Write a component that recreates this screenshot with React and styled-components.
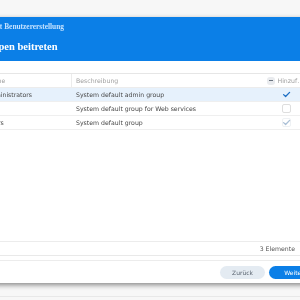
import React from 'react'
import styled, { createGlobalStyle } from 'styled-components';

const GlobalStyle = createGlobalStyle`
  html, body {
    margin: 0;
    padding: 0;
    background: #f7f7f7;
  }
  body {
    font-family: "DejaVu Sans", Verdana, sans-serif;
    -webkit-font-smoothing: antialiased;
  }
`

const groups = [
  { name: 'administrators', desc: 'System default admin group', state: 'on', selected: true },
  { name: 'http', desc: 'System default group for Web services', state: 'off' },
  { name: 'users', desc: 'System default group', state: 'locked' },
]

const Check = ({ state }) => (
  <Box $state={state}>
    {state !== 'off' && (
      <svg width="9" height="9" viewBox="0 0 9 9">
        <polyline points="1.6,4.6 3.6,6.5 7.6,2.4" fill="none"
          stroke={state === 'on' ? '#1d6fc4' : '#a9bfd6'} strokeWidth="1.3" strokeLinecap="round" strokeLinejoin="round" />
      </svg>
    )}
  </Box>
)

const App = () => {
  return (
    <Page>
      <GlobalStyle />
      <Dialog>
        <Header>
          <Subtitle>Assistent Benutzererstellung</Subtitle>
          <Title>Gruppen beitreten</Title>
        </Header>
        <Content>
          <Grid>
            <HeadRow>
              <HeadCell>Name</HeadCell>
              <HeadCell $divider>Beschreibung</HeadCell>
              <HeadCell>
                <Minus />
                <Ellipsis>Hinzufügen</Ellipsis>
              </HeadCell>
            </HeadRow>
            {groups.map((g) => (
              <Row key={g.name} $selected={g.selected}>
                <Cell>{g.name}</Cell>
                <Cell $desc>{g.desc}</Cell>
                <CheckCell><Check state={g.state} /></CheckCell>
              </Row>
            ))}
            <Filler />
            <Status>3 Elemente</Status>
          </Grid>
        </Content>
        <Footer>
          <Button>Zurück</Button>
          <Button $primary>Weiter</Button>
        </Footer>
      </Dialog>
      <Rule />
    </Page>
  )
}
export default App;

const Page = styled.div`
  width: 300px;
  height: 300px;
  overflow: hidden;
  padding-top: 17px;
  box-sizing: border-box;
  will-change: transform;
`
const Dialog = styled.div`
  width: 365px;
  margin-left: -40px;
  background: #fff;
  box-shadow: 0 2px 5px rgba(0, 0, 0, 0.45);
  display: flex;
  flex-direction: column;
`
const Header = styled.div`
  background: #0b7fe7;
  height: 44px;
  box-sizing: border-box;
  padding: 5px 0 0 14px;
  font-family: "Liberation Serif", "Times New Roman", serif;
  font-weight: 700;
  white-space: nowrap;
`
const Subtitle = styled.div`
  font-size: 7.4px;
  line-height: 10px;
  color: #c4e2ff;
`
const Title = styled.div`
  margin-top: 8px;
  font-size: 10.5px;
  line-height: 14px;
  color: #fff;
`
const Content = styled.div`
  padding: 12px 20px 0 22.5px;
`
const Grid = styled.div`
  display: flex;
  flex-direction: column;
  height: 181px;
  border-top: 1px solid #e6e6e6;
  border-bottom: 1px solid #e9e9e9;
  font-size: 6.2px;
  white-space: nowrap;
`
const HeadRow = styled.div`
  display: grid;
  grid-template-columns: 89.5px 190px 43px;
  height: 13px;
  border-bottom: 1px solid #ececec;
`
const HeadCell = styled.div`
  display: flex;
  align-items: center;
  gap: 3px;
  min-width: 0;
  padding-left: ${p => (p.$divider ? '4px' : '4.5px')};
  color: #a0a0a0;
  border-left: ${p => (p.$divider ? '1px solid #ececec' : 'none')};
  margin-left: ${p => (p.$divider ? '-1px' : '0')};
`
const Minus = styled.span`
  flex: none;
  width: 8px;
  height: 8px;
  border-radius: 3px;
  background: #e9ebee;
  position: relative;
  &::after {
    content: '';
    position: absolute;
    left: 2px;
    right: 2px;
    top: 3.5px;
    height: 1.2px;
    background: #6b7480;
  }
`
const Ellipsis = styled.span`
  overflow: hidden;
  text-overflow: ellipsis;
  min-width: 0;
`
const Row = styled.div`
  display: grid;
  grid-template-columns: 89.5px 190px 43px;
  height: 13px;
  border-bottom: 1px solid #efefef;
  background: ${p => (p.$selected ? '#e6f1fc' : '#fff')};
  color: #474747;
`
const Cell = styled.div`
  display: flex;
  align-items: center;
  padding-left: ${p => (p.$desc ? '4px' : '4.5px')};
`
const CheckCell = styled.div`
  display: flex;
  align-items: center;
  padding-left: 20px;
`
const Box = styled.span`
  width: 9px;
  height: 9px;
  box-sizing: border-box;
  border-radius: 2px;
  border: 1px solid ${p => (p.$state === 'off' ? '#dedede' : p.$state === 'locked' ? '#eef1f4' : 'transparent')};
  display: flex;
  align-items: center;
  justify-content: center;
  svg { flex: none; }
`
const Filler = styled.div`
  flex: 1;
`
const Status = styled.div`
  height: 13px;
  border-top: 1px solid #ececec;
  display: flex;
  align-items: center;
  justify-content: flex-end;
  padding-right: 10px;
  color: #555;
`
const Footer = styled.div`
  margin-top: 4px;
  border-top: 1px solid #ececec;
  height: 23px;
  box-sizing: border-box;
  padding: 5px 0 0 260px;
  display: flex;
  gap: 4px;
`
const Button = styled.button`
  width: ${p => (p.$primary ? '50px' : '45px')};
  height: 13px;
  padding: 0;
  border: none;
  border-radius: 7px;
  font-family: "DejaVu Sans", Verdana, sans-serif;
  font-size: 6px;
  background: ${p => (p.$primary ? '#0b7fe7' : '#e4ebf2')};
  color: ${p => (p.$primary ? '#fff' : '#5a6470')};
`
const Rule = styled.div`
  margin-top: 13px;
  border-top: 1px solid #e8e8e8;
`
